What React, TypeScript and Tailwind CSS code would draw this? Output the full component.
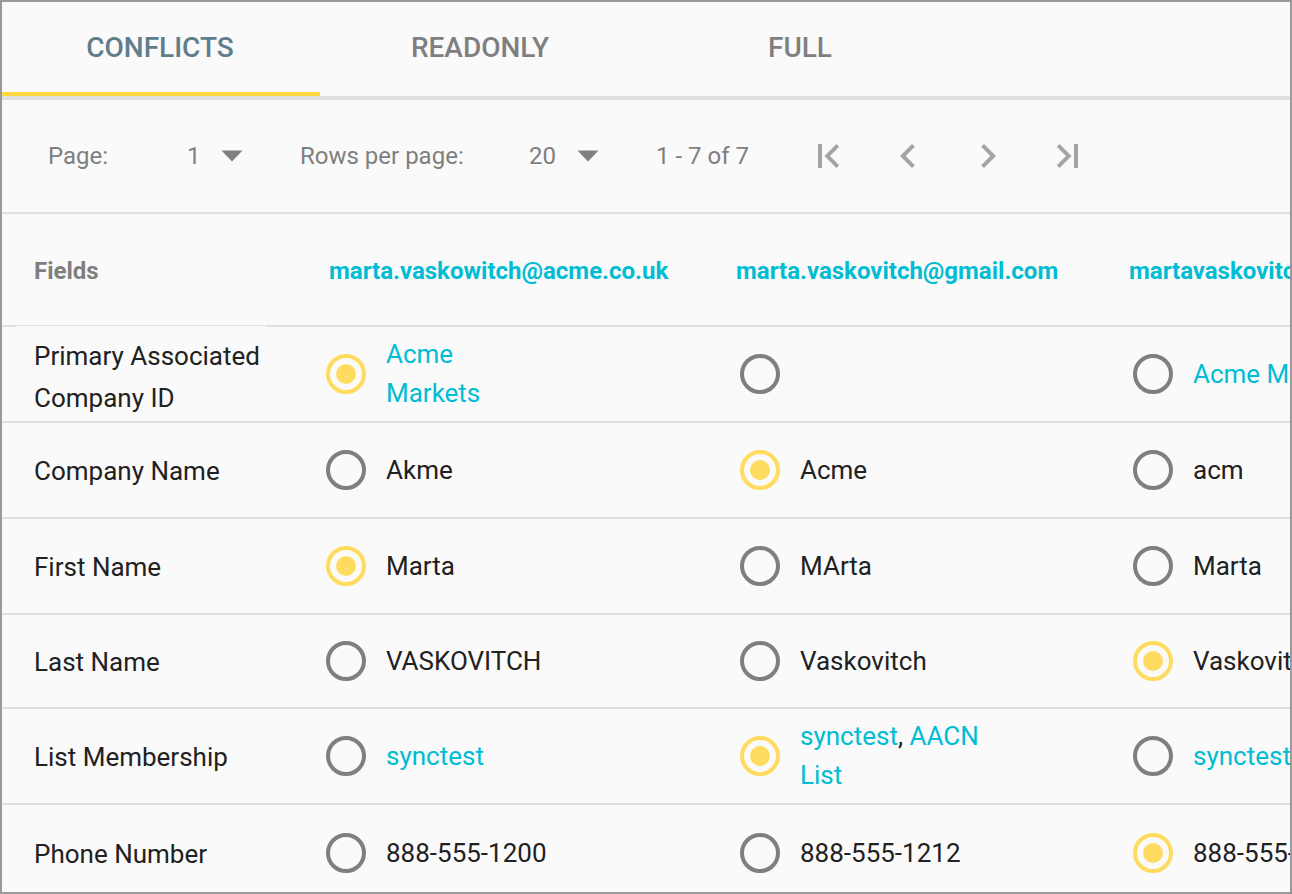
import { useState } from "react";
import { clsx } from "clsx";

type Part = { text: string; link?: boolean };
type Cell = Part[][]; // lines of parts

const link = (text: string): Part => ({ text, link: true });
const plain = (text: string): Cell => [[{ text }]];

const TABS = ["CONFLICTS", "READONLY", "FULL"];

const COLUMNS = [
    { email: "marta.vaskowitch@acme.co.uk", pad: "pl-[19px]" },
    { email: "marta.vaskovitch@gmail.com", pad: "pl-3" },
    { email: "martavaskovitch@yahoo.com", pad: "pl-3" },
];

type Row = { label: string; height: string; tall?: boolean; picked: number; cells: Cell[] };

const ROWS: Row[] = [
    {
        label: "Primary Associated Company ID",
        height: "h-24",
        tall: true,
        picked: 0,
        cells: [[[link("Acme")], [link("Markets")]], [], [[link("Acme Markets")]]],
    },
    { label: "Company Name", height: "h-24", picked: 1, cells: [plain("Akme"), plain("Acme"), plain("acm")] },
    { label: "First Name", height: "h-24", picked: 0, cells: [plain("Marta"), plain("MArta"), plain("Marta")] },
    {
        label: "Last Name",
        height: "h-[94px]",
        picked: 2,
        cells: [plain("VASKOVITCH"), plain("Vaskovitch"), plain("Vaskovitch")],
    },
    {
        label: "List Membership",
        height: "h-24",
        picked: 1,
        cells: [[[link("synctest")]], [[link("synctest"), { text: ", " }, link("AACN")], [link("List")]], [[link("synctest")]]],
    },
    {
        label: "Phone Number",
        height: "h-[98px]",
        picked: 2,
        cells: [plain("888-555-1200"), plain("888-555-1212"), plain("888-555-1212")],
    },
];

const PAGER = [
    { name: "First page", path: "M17.6 16.59L13.01 12l4.59-4.59L16.19 6l-6 6 6 6zM7 6h2v12H7z" },
    { name: "Previous page", path: "M15.41 7.41L14 6l-6 6 6 6 1.41-1.41L10.83 12z" },
    { name: "Next page", path: "M10 6L8.59 7.41 13.17 12l-4.58 4.59L10 18l6-6z" },
    { name: "Last page", path: "M6.4 7.41L10.99 12 6.4 16.59 7.81 18l6-6-6-6zM15 6h2v12h-2z" },
];

function Picker({ id, value, className }: { id: string; value: string; className: string }) {
    return (
        <div className={clsx("grid items-center", className)}>
            <select
                id={id}
                defaultValue={value}
                className="col-start-1 row-start-1 w-full appearance-none bg-transparent outline-none"
            >
                <option>{value}</option>
            </select>
            <svg
                className="pointer-events-none col-start-1 row-start-1 h-3 w-[22px] justify-self-end"
                viewBox="0 0 22 12"
                fill="currentColor"
            >
                <path d="M0.5 0.5h21L11 11.5z" />
            </svg>
        </div>
    );
}

function CellText({ cell }: { cell: Cell }) {
    return (
        <span className="whitespace-nowrap leading-[39px]">
            {cell.map((line, i) => (
                <span key={i} className="block">
                    {line.map((part) =>
                        part.link ? (
                            <a key={part.text} href="#" className="text-[#00bcd4]">
                                {part.text}
                            </a>
                        ) : (
                            part.text
                        )
                    )}
                </span>
            ))}
        </span>
    );
}

export default function App() {
    const [tab, setTab] = useState(0);
    const [picked, setPicked] = useState(ROWS.map((row) => row.picked));

    return (
        <div className="h-screen overflow-hidden border-2 border-[#999999] bg-[#fafafa] font-[Roboto,sans-serif] text-[#212121]">
            {/* Tabs */}
            <div role="tablist" className="grid grid-cols-[318px_320px_320px] border-b-4 border-[#e0e0e0]">
                {TABS.map((name, i) => (
                    <button
                        key={name}
                        role="tab"
                        aria-selected={tab === i}
                        onClick={() => setTab(i)}
                        className={clsx(
                            "h-[94px] border-b-4 pt-0.5 text-[28px] font-medium",
                            tab === i ? "border-[#ffd740] pr-0.5 text-[#607d8b]" : "border-transparent text-[#7f7f7f]"
                        )}
                    >
                        {name}
                    </button>
                ))}
            </div>

            {/* Pagination */}
            <div className="flex h-[114px] items-center border-b-2 border-[#e0e0e0] pl-11 text-2xl whitespace-nowrap text-[#7f7f7f]">
                <label htmlFor="page" className="w-[141px] pl-0.5">
                    Page:
                </label>
                <Picker id="page" value="1" className="w-14" />
                <label htmlFor="rows" className="ml-[57px] w-[229px]">
                    Rows per page:
                </label>
                <Picker id="rows" value="20" className="w-[70px]" />
                <span className="ml-[57px] w-[148px]">1 - 7 of 7</span>
                <div className="flex gap-8 text-[#a5a5a5]">
                    {PAGER.map((button) => (
                        <button key={button.name} aria-label={button.name}>
                            <svg className="size-12" viewBox="0 0 24 24" fill="currentColor">
                                <path d={button.path} />
                            </svg>
                        </button>
                    ))}
                </div>
            </div>

            {/* Records */}
            <div className="overflow-x-auto [scrollbar-width:none]">
                <table className="w-full min-w-[1508px] table-fixed border-separate border-spacing-0 text-left text-[26px]">
                    <colgroup>
                        <col className="w-[308px]" />
                        <col className="w-[414px]" />
                        <col className="w-[393px]" />
                        <col />
                    </colgroup>
                    <thead>
                        <tr className="text-2xl">
                            <th className="h-[113px] border-b-2 border-[#e0e0e0] pt-0.5 pl-8 font-bold text-[#7f7f7f]">Fields</th>
                            {COLUMNS.map((column) => (
                                <th key={column.email} className={clsx("border-b-2 border-[#e0e0e0] pt-0.5 font-bold", column.pad)}>
                                    <a href="#" className="text-[#00bcd4]">
                                        {column.email}
                                    </a>
                                </th>
                            ))}
                        </tr>
                    </thead>
                    <tbody>
                        {ROWS.map((row, r) => (
                            <tr key={row.label}>
                                <th
                                    scope="row"
                                    className={clsx(
                                        "border-b-2 border-[#e0e0e0] pl-8 leading-[42px] font-normal",
                                        row.height,
                                        !row.tall && "pt-0.5"
                                    )}
                                >
                                    {/* a two-line label overlaps the rule above it */}
                                    <span className={clsx("block", row.tall && "-mt-px -ml-[18px] h-[95px] w-[250px] bg-[#fafafa] pt-[9px] pl-[18px]")}>
                                        {row.label}
                                    </span>
                                </th>
                                {row.cells.map((cell, c) => (
                                    <td key={c} className="border-b-2 border-[#e0e0e0] pl-4">
                                        <label className="flex items-center gap-5">
                                            <input
                                                type="radio"
                                                name={row.label}
                                                aria-label={`${row.label}, ${COLUMNS[c].email}`}
                                                checked={picked[r] === c}
                                                onChange={() => setPicked(picked.map((p, i) => (i === r ? c : p)))}
                                                className="grid size-10 shrink-0 appearance-none place-items-center rounded-full border-4 border-[#7f7f7f] before:size-5 before:rounded-full checked:border-[#ffdc5f] checked:before:bg-[#ffdc5f]"
                                            />
                                            <CellText cell={cell} />
                                        </label>
                                    </td>
                                ))}
                            </tr>
                        ))}
                    </tbody>
                </table>
            </div>
        </div>
    );
}
